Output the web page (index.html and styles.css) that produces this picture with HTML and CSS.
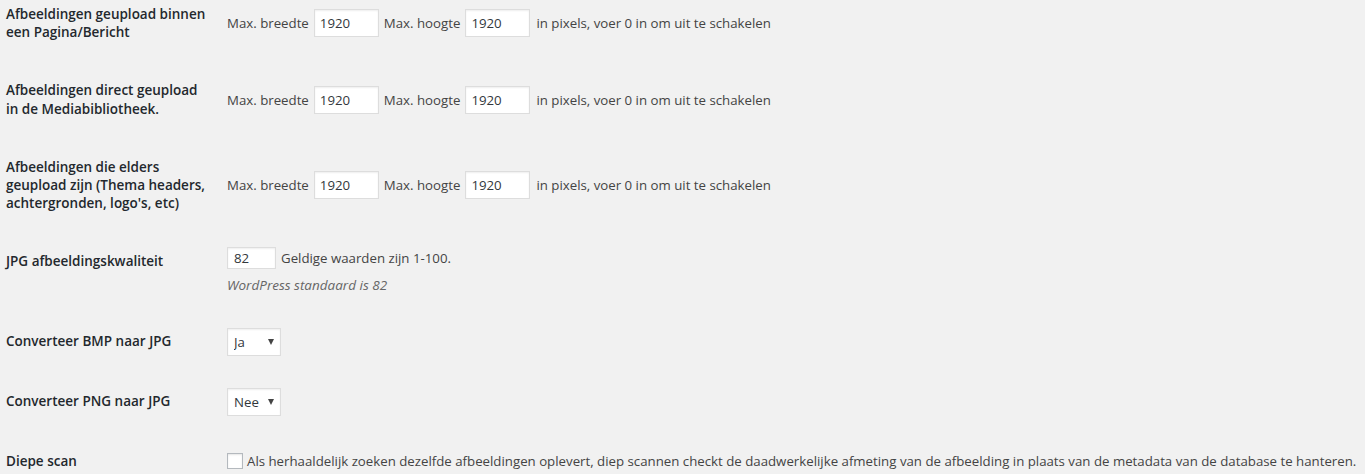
FILE: index.html
```html
<!DOCTYPE html>
<html lang="nl">
<head>
<meta charset="utf-8">
<title>Imsanity instellingen</title>
<link rel="stylesheet" href="styles.css">
</head>
<body>
<div class="wrap">
<table class="form-table">
  <tbody>
    <tr>
      <th>Afbeeldingen geupload binnen een Pagina/Bericht</th>
      <td>
        <div class="fields">
          <span>Max. breedte</span>
          <input class="num" type="text" value="1920">
          <span>Max. hoogte</span>
          <input class="num" type="text" value="1920">
          <span class="after">in pixels, voer 0 in om uit te schakelen</span>
        </div>
      </td>
    </tr>
    <tr>
      <th>Afbeeldingen direct geupload in de Mediabibliotheek.</th>
      <td>
        <div class="fields">
          <span>Max. breedte</span>
          <input class="num" type="text" value="1920">
          <span>Max. hoogte</span>
          <input class="num" type="text" value="1920">
          <span class="after">in pixels, voer 0 in om uit te schakelen</span>
        </div>
      </td>
    </tr>
    <tr>
      <th>Afbeeldingen die elders geupload zijn (Thema headers, achtergronden, logo's, etc)</th>
      <td>
        <div class="fields">
          <span>Max. breedte</span>
          <input class="num" type="text" value="1920">
          <span>Max. hoogte</span>
          <input class="num" type="text" value="1920">
          <span class="after">in pixels, voer 0 in om uit te schakelen</span>
        </div>
      </td>
    </tr>
    <tr>
      <th>JPG afbeeldingskwaliteit</th>
      <td>
        <div class="fields fields-small">
          <input class="small" type="text" value="82">
          <span>Geldige waarden zijn 1-100.</span>
        </div>
        <p class="description">WordPress standaard is 82</p>
      </td>
    </tr>
    <tr>
      <th>Converteer BMP naar JPG</th>
      <td>
        <span class="select-wrap">
          <select class="select"><option selected>Ja</option><option>Nee</option></select>
        </span>
      </td>
    </tr>
    <tr>
      <th>Converteer PNG naar JPG</th>
      <td>
        <span class="select-wrap">
          <select class="select"><option>Ja</option><option selected>Nee</option></select>
        </span>
      </td>
    </tr>
    <tr>
      <th>Diepe scan</th>
      <td>
        <label class="check">
          <input class="checkbox" type="checkbox">
          <span>Als herhaaldelijk zoeken dezelfde afbeeldingen oplevert, diep scannen checkt de daadwerkelijke afmeting van de afbeelding in plaats van de metadata van de database te hanteren.</span>
        </label>
      </td>
    </tr>
  </tbody>
</table>
</div>
</body>
</html>
```
FILE: styles.css
```css
html, body {
  margin: 0;
  padding: 0;
  background: #f1f1f1;
}

body {
  font-family: "Open Sans", "Noto Sans", "Liberation Sans", sans-serif;
  font-size: 13.25px;
  color: #444;
  overflow: hidden;
}

.wrap {
  padding-left: 6px;
  margin-top: -15px;
}

.form-table {
  border-collapse: collapse;
  table-layout: fixed;
  width: 100%;
}

.form-table th {
  box-sizing: content-box;
  width: 200px;
  padding: 20px 11px 20px 0;
  text-align: left;
  vertical-align: top;
  font-weight: 600;
  font-size: 13.5px;
  line-height: 18.2px;
  color: #23282d;
}

.form-table td {
  padding: 15px 0 15px 10px;
  vertical-align: middle;
  line-height: 18px;
}

.fields {
  display: flex;
  align-items: center;
  gap: 5px;
  height: 28px;
  white-space: nowrap;
}

.fields-small {
  height: 22px;
}

.fields .after {
  margin-left: 1px;
}

.num,
.small {
  box-sizing: border-box;
  margin: 0;
  background: #fff;
  border: 1px solid #ddd;
  box-shadow: inset 0 1px 2px rgba(0, 0, 0, 0.07);
  font-family: "Open Sans", "Noto Sans", "Liberation Sans", sans-serif;
  font-size: 13.25px;
  color: #32373c;
  outline: none;
}

.num {
  width: 65px;
  height: 28px;
  padding: 0 5px;
  flex: none;
}

.small {
  width: 49px;
  height: 22px;
  padding: 0 6px;
  flex: none;
}

.description {
  margin: 6px 0 0;
  font-style: italic;
  font-size: 13.5px;
  color: #666;
  line-height: 21.5px;
}

.select-wrap {
  position: relative;
  display: block;
  width: 54px;
  height: 28px;
  margin: 1px 0;
}

.select {
  appearance: none;
  -webkit-appearance: none;
  box-sizing: border-box;
  width: 54px;
  height: 28px;
  margin: 0;
  padding: 0 6px;
  background: #fff;
  border: 1px solid #ddd;
  border-radius: 0;
  box-shadow: inset 0 1px 2px rgba(0, 0, 0, 0.07);
  font-family: "Open Sans", "Noto Sans", "Liberation Sans", sans-serif;
  font-size: 13.25px;
  color: #32373c;
  outline: none;
}

.select-wrap::after {
  content: "";
  position: absolute;
  left: 41px;
  top: 11px;
  width: 0;
  height: 0;
  border-left: 3.5px solid transparent;
  border-right: 3.5px solid transparent;
  border-top: 6px solid #444;
  pointer-events: none;
}

.check {
  display: flex;
  align-items: center;
  gap: 4px;
  white-space: nowrap;
}

.checkbox {
  appearance: none;
  -webkit-appearance: none;
  box-sizing: border-box;
  width: 16px;
  height: 16px;
  margin: 0;
  background: #fff;
  border: 1px solid #b4b9be;
  box-shadow: inset 0 1px 2px rgba(0, 0, 0, 0.1);
  flex: none;
}
```
